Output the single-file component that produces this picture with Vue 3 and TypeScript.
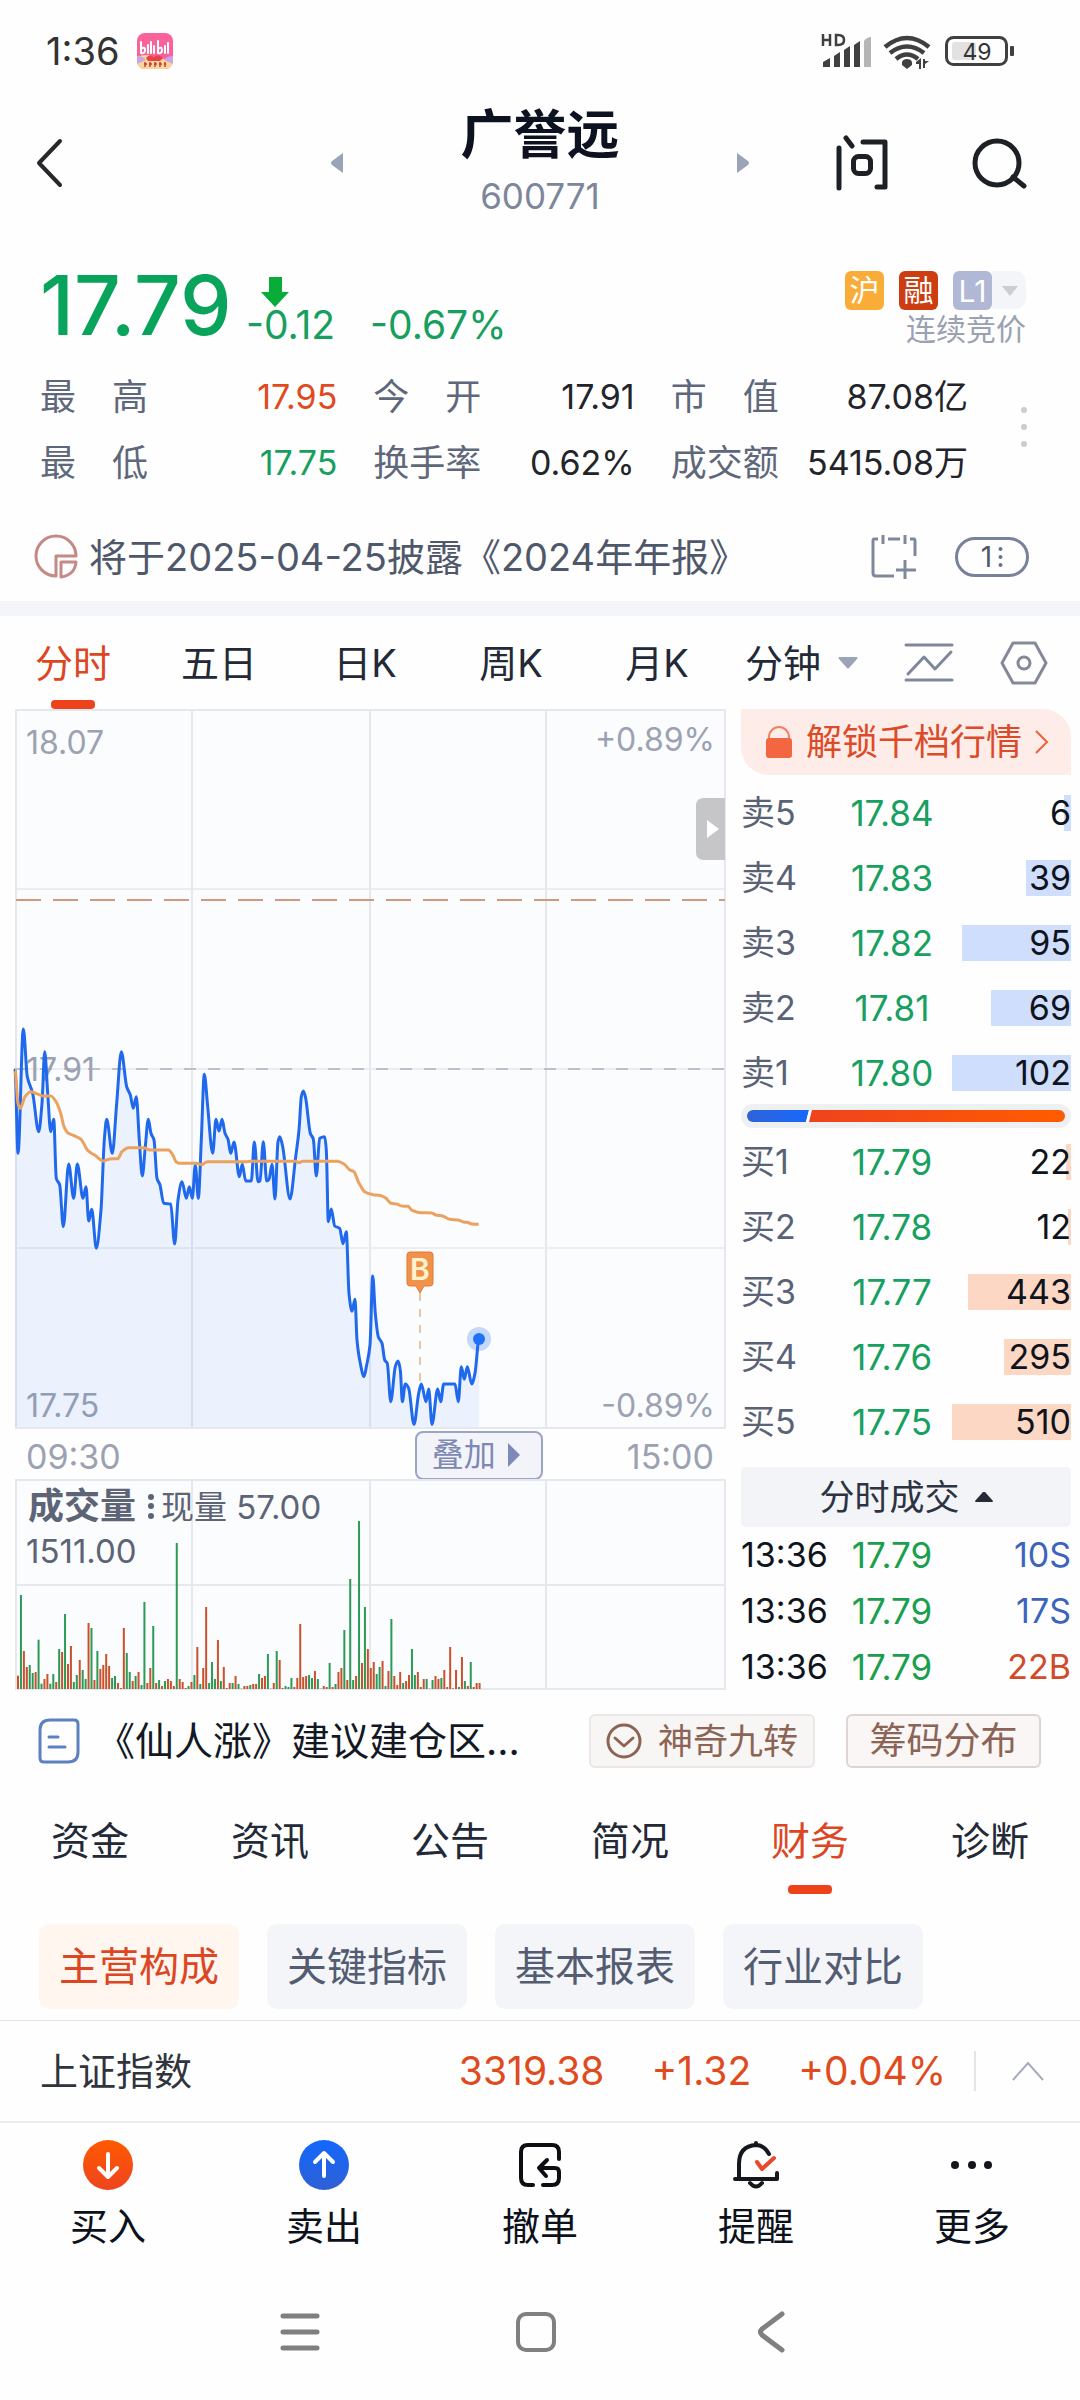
<script setup lang="ts">
import { ref } from 'vue'

type Tone = 'up' | 'down' | 'plain'
type Point = [number, number]

interface Level {
  name: string
  price: string
  volume: number
  share: number
}

const stats: { label: string; value: string; tone: Tone }[] = [
  { label: '最 高', value: '17.95', tone: 'up' },
  { label: '今 开', value: '17.91', tone: 'plain' },
  { label: '市 值', value: '87.08亿', tone: 'plain' },
  { label: '最 低', value: '17.75', tone: 'down' },
  { label: '换手率', value: '0.62%', tone: 'plain' },
  { label: '成交额', value: '5415.08万', tone: 'plain' },
]

const periods = ['分时', '五日', '日K', '周K', '月K']
const activePeriod = ref('分时')
const minute = ref('分钟')

const asks: Level[] = [
  { name: '卖5', price: '17.84', volume: 6, share: 5 },
  { name: '卖4', price: '17.83', volume: 39, share: 33 },
  { name: '卖3', price: '17.82', volume: 95, share: 81 },
  { name: '卖2', price: '17.81', volume: 69, share: 59 },
  { name: '卖1', price: '17.80', volume: 102, share: 88 },
]
const bids: Level[] = [
  { name: '买1', price: '17.79', volume: 22, share: 4 },
  { name: '买2', price: '17.78', volume: 12, share: 2 },
  { name: '买3', price: '17.77', volume: 443, share: 76 },
  { name: '买4', price: '17.76', volume: 295, share: 50 },
  { name: '买5', price: '17.75', volume: 510, share: 88 },
]
const deals = [
  { time: '13:36', price: '17.79', size: '10S', side: 'sell' },
  { time: '13:36', price: '17.79', size: '17S', side: 'sell' },
  { time: '13:36', price: '17.79', size: '22B', side: 'buy' },
]

const sections = ['资金', '资讯', '公告', '简况', '财务', '诊断']
const activeSection = ref('财务')
const chips = ['主营构成', '关键指标', '基本报表', '行业对比']
const activeChip = ref('主营构成')

/* Samples are stored as thirds of a unit, with an offset for each run. */
function run(ox: number, oy: number, raw: number[]): Point[] {
  const out: Point[] = []
  for (let i = 0; i < raw.length; i += 2) out.push([ox + raw[i] / 3, oy + raw[i + 1] / 3])
  return out
}

const price: Point[] = [
  ...run(0, 980, [
    45, 270, 54, 520, 70, 147, 82, 290, 98, 340, 116, 455, 126, 370, 134, 215, 143, 340, 152, 455, 161, 418,
    169, 595, 179, 615, 190, 740, 206, 552, 221, 655, 232, 552, 249, 655, 258, 620, 266, 723, 275, 688, 289, 805,
    303, 690, 313, 480, 320, 418, 337, 520, 350, 370, 364, 215, 380, 320, 391, 345, 400, 385, 409, 350, 418, 480,
    427, 588, 436, 500, 445, 418, 453, 460, 462, 480, 471, 595, 480, 615, 491, 670, 512, 672, 524, 792, 534, 660,
    546, 605, 559, 655, 568, 620, 577, 655, 586, 555, 595, 655, 604, 480, 613, 283, 623, 380, 638, 520, 648, 418,
    657, 453, 666, 418, 675, 460, 684, 478, 692, 520, 702, 486, 718, 590, 727, 553, 737, 603, 754, 603, 763, 486,
    774, 605,
  ]),
  ...run(250, 1040, [
    30, 423, 40, 305, 50, 423, 57, 418, 66, 373, 75, 477, 84, 305, 89, 290, 98, 320, 120, 477, 137, 350, 147, 270,
    154, 170, 160, 153, 167, 175, 181, 280, 190, 297, 199, 408, 209, 295, 224, 290, 229, 330, 235, 545, 244, 507,
    254, 558, 269, 565, 279, 611, 289, 575, 297, 760, 306, 814, 315, 778, 321, 900, 330, 965, 342, 1010, 350, 975,
  ]),
  ...run(370, 1180, [
    0, 495, 8, 288, 16, 400, 25, 470, 36, 490, 44, 540, 52, 550, 62, 665, 76, 560, 84, 543, 91, 570, 97, 665,
    106, 612, 116, 625, 132, 733, 146, 640, 154, 612, 168, 665, 176, 627, 186, 733, 203, 627, 212, 665, 221, 612,
    255, 612, 265, 665, 274, 560, 283, 598, 292, 560, 305, 612, 315, 580, 327, 478,
  ]),
]

const average: Point[] = [
  ...run(0, 980, [
    45, 270, 54, 370, 61, 385, 75, 350, 92, 335, 110, 341, 130, 348, 152, 348, 170, 368, 182, 400, 192, 440,
    205, 460, 220, 466, 243, 478, 264, 512, 285, 526, 310, 543, 330, 537, 353, 536, 366, 515, 385, 503, 430, 503,
    450, 510, 505, 510, 517, 522, 528, 545, 540, 550, 590, 550, 605, 554, 622, 545, 740, 545,
  ]),
  ...run(250, 1040, [
    0, 364, 137, 364, 148, 368, 158, 364, 262, 364, 283, 373, 300, 390, 312, 395, 325, 425, 345, 456, 370, 464,
    388, 466, 406, 473, 423, 490, 440, 492, 455, 498, 474, 499, 486, 511, 512, 518, 545, 519, 560, 526, 575, 527,
    600, 538, 625, 540, 640, 546, 652, 547, 665, 552, 686, 553,
  ]),
]

/* Monotone cubic interpolation keeps peaks rounded without overshoot. */
function smooth(p: Point[]): string {
  const slope = (i: number) => (p[i + 1][1] - p[i][1]) / (p[i + 1][0] - p[i][0])
  const m = p.map((_, i) => {
    if (i === 0 || i === p.length - 1) return 0
    const a = slope(i - 1)
    const b = slope(i)
    return a * b <= 0 ? 0 : (2 * a * b) / (a + b)
  })
  let d = `M${p[0][0].toFixed(1)} ${p[0][1].toFixed(1)}`
  for (let i = 0; i < p.length - 1; i++) {
    const h = (p[i + 1][0] - p[i][0]) / 3
    const c = [
      p[i][0] + h, p[i][1] + m[i] * h,
      p[i + 1][0] - h, p[i + 1][1] - m[i + 1] * h,
      p[i + 1][0], p[i + 1][1],
    ]
    d += 'C' + c.map((n) => n.toFixed(1)).join(' ')
  }
  return d
}

const pricePath = smooth(price)
const areaPath = `${pricePath}V1427H15Z`
const averagePath = smooth(average)

/* One entry a minute: r for a rise, g for a fall, then the bar's height. */
const volume = (
  'r40 g282 r114 r66 g72 g48 r51 g148 g16 r30 r45 g16 g45 r21 g120 r111 g225 r75 r129 g21 g42 r87 g57 g30 r198 g183 ' +
  'r27 g114 r60 r72 r105 r69 g33 g39 r18 r3 r183 g108 g51 r24 g39 r51 g12 g261 r18 r63 g189 r18 g27 r9 g24 r30 r24 ' +
  'r9 g438 r30 r21 r3 g9 r21 g42 r126 g15 r63 r246 g18 g81 g30 r147 g24 r66 r3 r18 g18 r39 g15 g1 r9 r9 g12 r15 r15 ' +
  'g45 r33 r39 g105 r1 r18 g114 r87 r3 g9 g6 g33 r6 r33 r195 r36 r39 g42 g33 r54 g30 r1 r9 r6 g78 r6 g15 r51 r63 ' +
  'g177 r27 g330 g27 r39 g504 r78 g246 r120 r63 r81 g45 g66 r84 g9 r54 g210 r39 r12 r51 g18 r24 r42 g120 g42 r51 r6 ' +
  'r30 g30 r1 g27 r39 r30 g33 r57 r6 r126 r2 r57 g6 r96 g24 r9 g81 r6 r18 r18'
)
  .split(' ')
  .map((s, i) => ({ x: 17 + i * 2.94, h: Number(s.slice(1)) / 3, rise: s[0] === 'r' }))
</script>

<template>
  <div class="app">
    <div class="status">
      <span class="clock">1:36</span>
      <svg class="bili" width="36" height="36" viewBox="0 0 36 36" aria-hidden="true">
        <defs><clipPath id="bili"><rect width="36" height="36" rx="8" /></clipPath></defs>
        <g clip-path="url(#bili)">
          <rect width="36" height="36" fill="#f9629b" />
          <path d="M0 24q9-4 18 0t18 0v12H0z" fill="#f9d79a" />
          <path d="M0 23q6 0 9 4l-9 4zM36 23q-6 0-9 4l9 4z" fill="#c9a5e6" />
          <path d="M9 25q4-5 8-1 5-4 9 1l-3 3H11z" fill="#e8434a" />
          <path d="M4 9v11M4 16q4-3 4 1t-4 3M11 12v8M14 9v11M17 13v7M21 8v12M21 16q4-3 4 1t-4 3M28 13v7M31 10v10" fill="none" stroke="#fff" stroke-width="2" stroke-linecap="round" />
          <path d="M7 31h3M12 31h3M17 31h3M22 31h3M27 31h2M8 29v5M13 29v5M18 29v5M23 29v5M28 29v5" stroke="#cf3a3a" stroke-width="1.5" />
        </g>
      </svg>
      <svg class="signals" width="196" height="36" viewBox="820 33 196 36" aria-hidden="true">
        <path d="M823 34v12M830 34v12M823 40h7M836 35v10h2q6 0 6-5t-6-5z" fill="none" stroke="#404040" stroke-width="2.500" />
        <g fill="#404040">
          <path d="M823 62l7-4v9h-7zM834 56l6-4v15h-6zM844 50l6-4v21h-6zM854 45l6-4v26h-6z" />
          <path d="M864 41q3-4 7-4v30h-7z" fill="#b5b5b5" />
          <path d="M902 65q-1-6 5-6t5 6l-5 4z" />
          <path d="M916 62l5-4v11h-2v-5h-3zM923 59h2v2h4l-4 3v4h-2z" />
        </g>
        <g fill="none" stroke="#404040" stroke-width="4.500">
          <path d="M885 47q22-18 44 0" />
          <path d="M890 53q17-13 34 0" />
          <path d="M896 59q11-9 22 0" />
        </g>
        <rect x="946.500" y="37.500" width="60" height="27" rx="7" fill="none" stroke="#404040" stroke-width="3" />
        <rect x="952" y="42" width="24" height="18" rx="3" fill="#e2e2e2" />
        <rect x="1010" y="46" width="4" height="10" rx="1" fill="#404040" />
        <text x="977" y="60" text-anchor="middle" font-size="23" fill="#333">49</text>
      </svg>
    </div>

    <header class="top">
      <button class="icon-btn back" type="button" aria-label="返回">
        <svg width="28" height="50" viewBox="0 0 28 50"><path d="M25 3L4 25l21 22" fill="none" stroke="#26282b" stroke-width="4" stroke-linecap="round" stroke-linejoin="round" /></svg>
      </button>
      <button class="icon-btn" type="button" aria-label="上一只">
        <svg width="12" height="20" viewBox="0 0 12 20"><path d="M12 0v20L1 12q-2-2 0-4z" fill="#9aa3b8" /></svg>
      </button>
      <div class="title">
        <h1>广誉远</h1>
        <span>600771</span>
      </div>
      <button class="icon-btn" type="button" aria-label="下一只">
        <svg width="12" height="20" viewBox="0 0 12 20"><path d="M0 0v20l11-8q2-2 0-4z" fill="#9aa3b8" /></svg>
      </button>
      <button class="icon-btn ask" type="button" aria-label="问">
        <svg width="56" height="56" viewBox="833 134 56 56" fill="none" stroke="#1d2126" stroke-width="5" stroke-linecap="round" stroke-linejoin="round">
          <path d="M838 147v40M845 137l6 8M862 141h22v45h-8" />
          <rect x="852.500" y="155.500" width="17" height="17" rx="5" />
        </svg>
      </button>
      <button class="icon-btn search" type="button" aria-label="搜索">
        <svg width="56" height="52" viewBox="972 136 56 52" fill="none" stroke="#1d2126" stroke-width="5" stroke-linecap="round">
          <circle cx="997" cy="162" r="22" /><path d="M1013 176l11 9" />
        </svg>
      </button>
    </header>

    <section class="quote">
      <strong class="last">17.79</strong>
      <div class="change">
        <svg width="28" height="34" viewBox="0 0 28 34" aria-hidden="true"><path d="M8 4h13v15h7L14 34 0 19h8z" fill="#07ad37" /></svg>
        <div class="diffs"><span>-0.12</span><span>-0.67%</span></div>
      </div>
      <div class="flags">
        <div class="badges">
          <span class="badge hu">沪</span>
          <span class="badge rong">融</span>
          <button class="badge level" type="button">L1</button>
          <svg width="34" height="38" viewBox="0 0 34 38" aria-hidden="true"><path d="M0 0h22q12 0 12 12v14q0 12-12 12H0z" fill="#f4f5f8" /><path d="M10 15h16l-8 10z" fill="#c9cdd6" /></svg>
        </div>
        <span class="phase">连续竞价</span>
      </div>
    </section>

    <section class="stats">
      <dl>
        <div v-for="s in stats" :key="s.label">
          <dt>{{ s.label }}</dt>
          <dd :class="s.tone">{{ s.value }}</dd>
        </div>
      </dl>
      <button class="icon-btn more-stats" type="button" aria-label="更多指标">
        <svg width="8" height="42" viewBox="0 0 8 42" fill="#c9cdd8"><circle cx="4" cy="4" r="3" /><circle cx="4" cy="21" r="3" /><circle cx="4" cy="38" r="3" /></svg>
      </button>
    </section>

    <section class="notice">
      <svg width="46" height="46" viewBox="0 0 46 46" fill="none" stroke="#c48a85" stroke-width="3" aria-hidden="true">
        <path d="M22 42A20 20 0 1 1 42 22H22zM27 28h15q-1 13-15 15z" stroke-linejoin="round" />
      </svg>
      <a href="#report">将于2025-04-25披露《2024年年报》</a>
      <button class="icon-btn" type="button" aria-label="加入日历">
        <svg width="46" height="46" viewBox="0 0 46 46" fill="none" stroke="#7f889b" stroke-width="3">
          <path d="M7 5H3q-1 0-1 2v32q0 3 3 3h18M17 5h12M39 5h4q1 0 1 2v15M12 1v9M34 1v9M34 26v19M25 36h20" />
        </svg>
      </button>
      <button class="count" type="button">
        <span>1</span>
        <svg width="5" height="22" viewBox="0 0 5 22" fill="#697287" aria-hidden="true"><circle cx="2.500" cy="3" r="2" /><circle cx="2.500" cy="11" r="2" /><circle cx="2.500" cy="19" r="2" /></svg>
      </button>
    </section>

    <nav class="periods">
      <button v-for="p in periods" :key="p" type="button" :class="{ active: p === activePeriod }" @click="activePeriod = p">{{ p }}</button>
      <div class="tools">
        <label class="minute">
          <select v-model="minute" aria-label="分钟周期"><option>分钟</option></select>
          <svg width="20" height="12" viewBox="0 0 20 12" aria-hidden="true"><path d="M1 0h18q1 1 0 2l-8 9q-1 1-2 0L1 2q-1-1 0-2z" fill="#9aa3b8" /></svg>
        </label>
        <button class="icon-btn" type="button" aria-label="画线">
          <svg width="50" height="40" viewBox="0 0 50 40" fill="none" stroke="#7f889b" stroke-width="3" stroke-linecap="round" stroke-linejoin="round"><path d="M2 2h46M2 37h46M4 31l16-17 11 12L47 9" /></svg>
        </button>
        <button class="icon-btn" type="button" aria-label="设置">
          <svg width="48" height="44" viewBox="0 0 48 44" fill="none" stroke="#828999" stroke-width="3" stroke-linejoin="round"><path d="M13 2h22l11 20-11 20H13L2 22z" /><circle cx="24" cy="22" r="6" /></svg>
        </button>
      </div>
    </nav>

    <main class="market">
      <div class="charts">
        <svg class="chart" viewBox="15 709 711 720" role="img" aria-label="分时走势">
          <rect x="16" y="710" width="709" height="718" fill="#fbfcfe" />
          <g fill="none" stroke="#e6e8ee" stroke-width="2">
            <path d="M16 710h709v718H16zM192 710v718M370 710v718M546 710v718" />
            <path d="M16 889h709M16 1069h709M16 1248h709" stroke-width="1.500" />
          </g>
          <path d="M16 900h709" stroke="#cf9a80" stroke-width="2" stroke-dasharray="25 12" />
          <path d="M16 1069h709" stroke="#bdbfc9" stroke-width="2" stroke-dasharray="12 12" />
          <g class="axis">
            <text x="26" y="754">18.07</text>
            <text x="715" y="751" text-anchor="end">+0.89%</text>
            <text x="26" y="1081">17.91</text>
            <text x="26" y="1417">17.75</text>
            <text x="715" y="1417" text-anchor="end">-0.89%</text>
          </g>
          <path :d="areaPath" fill="#1b6cf0" fill-opacity="0.070" />
          <path d="M420 1293v90" stroke="#e6c9a4" stroke-width="2" stroke-dasharray="8 8" />
          <path :d="pricePath" fill="none" stroke="#2069ec" stroke-width="3" stroke-linejoin="round" stroke-linecap="round" />
          <path :d="averagePath" fill="none" stroke="#eaa25e" stroke-width="3" stroke-linejoin="round" />
          <circle cx="479" cy="1339" r="12" fill="#1b6cf0" fill-opacity="0.250" />
          <circle cx="479" cy="1339" r="6" fill="#1f71f7" />
          <path d="M410 1252h20q3 0 3 3v28q0 3-3 3h-6l-4 7-4-7h-6q-3 0-3-3v-28q0-3 3-3z" fill="#f0924a" stroke="#e07a35" />
          <text class="buy-mark" x="420" y="1280" text-anchor="middle">B</text>
          <path d="M725 798h-21q-8 0-8 8v46q0 8 8 8h21z" fill="#c6c6c8" />
          <path d="M707 820v18l12-9z" fill="#fff" />
        </svg>
        <div class="times">
          <span>09:30</span>
          <button class="overlay" type="button">
            叠加
            <svg width="12" height="24" viewBox="0 0 12 24" aria-hidden="true"><path d="M0 0l12 12L0 24z" fill="#7d89b8" /></svg>
          </button>
          <span>15:00</span>
        </div>
        <svg class="chart" viewBox="15 1479 711 211" role="img" aria-label="成交量">
          <rect x="16" y="1480" width="709" height="209" fill="#fbfcfe" />
          <path d="M16 1480h709v209H16zM192 1480v209M370 1480v209M546 1480v209M16 1585h709" fill="none" stroke="#e6e8ee" stroke-width="2" />
          <rect v-for="(b, i) in volume" :key="i" :x="b.x" :y="1689 - b.h" width="2" :height="b.h" :fill="b.rise ? '#c9512c' : '#2c9a57'" />
          <g class="legend">
            <text class="strong" x="28" y="1519">成交量</text>
            <circle cx="151" cy="1497" r="3" /><circle cx="151" cy="1506" r="3" /><circle cx="151" cy="1516" r="3" />
            <text x="161" y="1519">现量 57.00</text>
            <text x="26" y="1563">1511.00</text>
          </g>
        </svg>
      </div>

      <aside class="book">
        <button class="unlock" type="button">
          <svg width="28" height="32" viewBox="0 0 28 32" aria-hidden="true"><path d="M4 14v-3a10 10 0 0 1 20 0v3" fill="none" stroke="#f08264" stroke-width="2" /><rect x="1" y="12" width="26" height="20" rx="3" fill="#f26641" /></svg>
          解锁千档行情
          <svg width="14" height="26" viewBox="0 0 14 26" aria-hidden="true"><path d="M1 2l11 11L1 24" fill="none" stroke="#e8623f" stroke-width="2" /></svg>
        </button>
        <table class="levels ask-side">
          <tbody>
            <tr v-for="l in asks" :key="l.name">
              <th scope="row">{{ l.name }}</th>
              <td class="price">{{ l.price }}</td>
              <td class="size"><i :style="{ width: l.share + '%' }"></i><span>{{ l.volume }}</span></td>
            </tr>
          </tbody>
        </table>
        <svg class="ratio" width="330" height="24" viewBox="0 0 330 24" aria-hidden="true">
          <defs>
            <linearGradient id="sellRatio"><stop offset="0" stop-color="#2f63d8" /><stop offset="1" stop-color="#1768fb" /></linearGradient>
            <linearGradient id="buyRatio"><stop offset="0" stop-color="#ee431d" /><stop offset="1" stop-color="#ff5c00" /></linearGradient>
          </defs>
          <rect width="330" height="24" rx="12" fill="#eff0f2" />
          <path d="M12 6h56l-3 12H12a6 6 0 0 1 0-12z" fill="url(#sellRatio)" />
          <path d="M68 6h3l-3 12h-3z" fill="#fff" />
          <path d="M71 6h247a6 6 0 0 1 0 12H68z" fill="url(#buyRatio)" />
        </svg>
        <table class="levels bid-side">
          <tbody>
            <tr v-for="l in bids" :key="l.name">
              <th scope="row">{{ l.name }}</th>
              <td class="price">{{ l.price }}</td>
              <td class="size"><i :style="{ width: l.share + '%' }"></i><span>{{ l.volume }}</span></td>
            </tr>
          </tbody>
        </table>
        <button class="deals-toggle" type="button">
          分时成交
          <svg width="18" height="10" viewBox="0 0 18 10" aria-hidden="true"><path d="M8 0q1-1 2 0l8 9q0 1-1 1H1q-1 0-1-1z" fill="#262b38" /></svg>
        </button>
        <table class="levels deals">
          <tbody>
            <tr v-for="(d, i) in deals" :key="i">
              <td class="time">{{ d.time }}</td>
              <td class="price">{{ d.price }}</td>
              <td class="size" :class="d.side">{{ d.size }}</td>
            </tr>
          </tbody>
        </table>
      </aside>
    </main>

    <section class="tips">
      <svg width="42" height="46" viewBox="0 0 42 46" fill="none" stroke="#5c80c2" stroke-width="3" stroke-linecap="round" aria-hidden="true">
        <path d="M12 2h24q4 0 4 4v28q0 10-10 10H6q-4 0-4-4V12Q2 2 12 2zM11 19h9M11 29h16" />
      </svg>
      <a href="#tip">《仙人涨》建议建仓区...</a>
      <button class="tag nine" type="button">
        <svg width="36" height="36" viewBox="0 0 36 36" fill="none" stroke="#8b6455" stroke-width="3" stroke-linecap="round" stroke-linejoin="round" aria-hidden="true"><circle cx="18" cy="18" r="16" /><path d="M9 15l9 8 9-8" /></svg>
        神奇九转
      </button>
      <button class="tag chipdist" type="button">筹码分布</button>
    </section>

    <nav class="sections">
      <button v-for="s in sections" :key="s" type="button" :class="{ active: s === activeSection }" @click="activeSection = s">{{ s }}</button>
    </nav>

    <div class="chips">
      <button v-for="c in chips" :key="c" type="button" :class="{ active: c === activeChip }" @click="activeChip = c">{{ c }}</button>
    </div>

    <section class="index">
      <span class="name">上证指数</span>
      <span class="num">3319.38</span>
      <span class="num">+1.32</span>
      <span class="num">+0.04%</span>
      <button class="icon-btn" type="button" aria-label="展开指数">
        <svg width="32" height="20" viewBox="0 0 32 20"><path d="M1 19L16 2l15 17" fill="none" stroke="#a3abbd" stroke-width="2" /></svg>
      </button>
    </section>

    <nav class="actions">
      <button type="button">
        <svg width="52" height="52" viewBox="0 0 52 52" aria-hidden="true">
          <defs><linearGradient id="buyDisc" x2="0" y2="1"><stop offset="0" stop-color="#ff5a00" /><stop offset="1" stop-color="#ee4420" /></linearGradient></defs>
          <circle cx="26" cy="26" r="25" fill="url(#buyDisc)" /><path d="M26 15v22M17 29l9 9 9-9" fill="none" stroke="#fff" stroke-width="4" stroke-linecap="round" stroke-linejoin="round" />
        </svg>
        买入
      </button>
      <button type="button">
        <svg width="52" height="52" viewBox="0 0 52 52" aria-hidden="true">
          <defs><linearGradient id="sellDisc" x2="0" y2="1"><stop offset="0" stop-color="#1267fd" /><stop offset="1" stop-color="#2f60d4" /></linearGradient></defs>
          <circle cx="26" cy="26" r="25" fill="url(#sellDisc)" /><path d="M26 37V15M17 23l9-9 9 9" fill="none" stroke="#fff" stroke-width="4" stroke-linecap="round" stroke-linejoin="round" />
        </svg>
        卖出
      </button>
      <button type="button">
        <svg width="52" height="52" viewBox="0 0 52 52" fill="none" stroke="#0c0e12" stroke-width="4" stroke-linecap="round" stroke-linejoin="round" aria-hidden="true">
          <path d="M45 20V13q0-7-7-7H14q-7 0-7 7v26q0 7 7 7h5M29 46h9q7 0 7-7v-6q0-4-4-4H26M33 21l-8 8 7 8" />
        </svg>
        撤单
      </button>
      <button type="button">
        <svg width="52" height="52" viewBox="0 0 52 52" fill="none" stroke="#14171c" stroke-width="4" stroke-linecap="round" stroke-linejoin="round" aria-hidden="true">
          <path d="M39 15Q34 6 26 6 9 7 9 25v15M5 40h42v-6M26 4v2M20 44q6 7 12 0" /><path d="M27 23l5 7 12-11" stroke="#e8492a" />
        </svg>
        提醒
      </button>
      <button type="button">
        <svg width="52" height="52" viewBox="0 0 52 52" fill="#14171c" aria-hidden="true"><circle cx="9" cy="26" r="4" /><circle cx="26" cy="26" r="4" /><circle cx="42" cy="26" r="4" /></svg>
        更多
      </button>
    </nav>

    <div class="sysnav">
      <button class="icon-btn" type="button" aria-label="最近任务">
        <svg width="42" height="42" viewBox="0 0 42 42" stroke="#808080" stroke-width="5" stroke-linecap="round"><path d="M4 5h34M4 21h34M4 37h34" /></svg>
      </button>
      <button class="icon-btn" type="button" aria-label="主页">
        <svg width="42" height="42" viewBox="0 0 42 42"><rect x="3" y="3" width="36" height="36" rx="8" fill="none" stroke="#808080" stroke-width="4" /></svg>
      </button>
      <button class="icon-btn" type="button" aria-label="后退">
        <svg width="42" height="42" viewBox="0 0 42 42" fill="none" stroke="#808080" stroke-width="5" stroke-linecap="round" stroke-linejoin="round"><path d="M31 3L11 18q-3 3 0 6l20 15" /></svg>
      </button>
    </div>
  </div>
</template>

<style>
body {
  margin: 0;
  background: #fefefe;
}
</style>

<style scoped>
.app {
  font-family: Inter, 'Noto Sans CJK SC', sans-serif;
  font-size: 34px;
  line-height: 48px;
  color: #232936;
  background: #fefefe;
}
button,
select {
  font: inherit;
  color: inherit;
  background: none;
  border: 0;
  padding: 0;
  margin: 0;
  cursor: pointer;
}
svg {
  display: block;
  flex: none;
}
a {
  color: inherit;
  text-decoration: none;
}
.icon-btn {
  display: flex;
  align-items: center;
  justify-content: center;
}
.status {
  display: flex;
  align-items: center;
  height: 96px;
  padding: 6px 64px 0 46px;
  box-sizing: border-box;
}
.clock {
  width: 74px;
  font-size: 38px;
  color: #333;
}
.bili {
  margin-left: 17px;
}
.signals {
  margin-left: auto;
}
.top {
  display: grid;
  grid-template-columns: 331px 12px 1fr 12px 83px 58px 190px;
  align-items: center;
  height: 134px;
}
.back {
  justify-self: start;
  margin-left: 35px;
}
.ask {
  justify-self: end;
  grid-column: 5 / 7;
}
.search {
  justify-self: end;
  margin-right: 52px;
}
.title {
  display: flex;
  flex-direction: column;
  align-items: center;
  color: #7d869a;
}
.title h1 {
  margin: 0;
  font-size: 53px;
  line-height: 66px;
  font-weight: 700;
  color: #0d1220;
}
.title span {
  font-size: 35px;
  line-height: 56px;
}
.quote {
  display: flex;
  padding: 24px 54px 0 40px;
  height: 136px;
  box-sizing: border-box;
}
.last {
  width: 206px;
  font-size: 82px;
  line-height: 104px;
  font-weight: 500;
  color: #08a45c;
}
.change {
  margin-top: 19px;
  color: #169f5f;
}
.change svg {
  margin-left: 15px;
}
.diffs {
  display: flex;
  gap: 35px;
  font-size: 39px;
  line-height: 36px;
}
.flags {
  display: flex;
  flex-direction: column;
  align-items: flex-end;
  margin: 17px 0 0 auto;
}
.badges {
  display: flex;
}
.badge {
  width: 39px;
  height: 39px;
  margin-right: 15px;
  border-radius: 6px;
  color: #fff;
  font-size: 30px;
  line-height: 38px;
  text-align: center;
}
.hu {
  background: #faac39;
}
.rong {
  background: #cc3e12;
}
.level {
  margin-right: 0;
  background: #b1b8d5;
}
.phase {
  margin-top: 3px;
  font-size: 30px;
  line-height: 32px;
  color: #9aa1b2;
}
.stats {
  display: flex;
  align-items: center;
}
.stats dl {
  flex: 1;
  display: grid;
  grid-template-columns: 297fr 261fr 297fr;
  column-gap: 36px;
  row-gap: 18px;
  margin: 0;
  padding: 7px 0 0 40px;
}
.stats dl div {
  display: flex;
  justify-content: space-between;
}
.stats dt {
  width: 108px;
  font-size: 36px;
  color: #5f687b;
  text-align-last: justify;
  white-space: nowrap;
}
.stats dd {
  margin: 0;
  color: #222429;
  white-space: nowrap;
}
.stats dd.up {
  color: #e04a1c;
}
.stats dd.down {
  color: #169f5f;
}
.more-stats {
  width: 112px;
}
.notice {
  display: flex;
  align-items: center;
  height: 129px;
  padding: 25px 51px 0 34px;
  border-bottom: 15px solid #f4f5fa;
  box-sizing: border-box;
  color: #4f586b;
  font-size: 38px;
}
.notice a {
  margin: 0 auto 0 9px;
}
.count {
  display: flex;
  align-items: center;
  justify-content: center;
  gap: 6px;
  width: 74px;
  height: 40px;
  margin-left: 38px;
  border: 3px solid #78829a;
  border-radius: 20px;
  box-sizing: border-box;
  font-size: 28px;
  line-height: 28px;
}
.periods {
  display: grid;
  grid-template-columns: repeat(5, 1fr) 350px;
  height: 93px;
  font-size: 38px;
}
.periods > button,
.sections button {
  position: relative;
}
.periods .active,
.sections .active {
  color: #dc4622;
}
.periods .active::after,
.sections .active::after {
  content: '';
  position: absolute;
  left: calc(50% - 22px);
  bottom: 0;
  width: 44px;
  height: 9px;
  border-radius: 4px;
  background: #ee431a;
}
.tools {
  display: flex;
  align-items: center;
  justify-content: space-between;
  padding: 0 32px 0 15px;
}
.minute {
  display: flex;
  align-items: center;
  gap: 16px;
}
.minute select {
  appearance: none;
  height: 48px;
}
.market {
  display: grid;
  grid-template-columns: 1fr 330px;
  gap: 15px;
  padding: 0 9px 0 15px;
}
.chart {
  width: 100%;
  height: auto;
  overflow: visible;
}
.axis text {
  font-size: 32px;
  fill: #9ba2b1;
}
.buy-mark {
  font-size: 30px;
  font-weight: 600;
  fill: #fff3cf;
}
.times {
  display: grid;
  grid-template-columns: 1fr auto auto;
  column-gap: 84px;
  align-items: center;
  height: 50px;
  padding: 0 12px 0 11px;
  color: #9ba2b1;
}
.times span {
  padding-top: 4px;
}
.overlay {
  display: flex;
  align-items: center;
  justify-content: space-between;
  width: 128px;
  height: 49px;
  padding: 0 21px 0 15px;
  box-sizing: border-box;
  border: 2px solid #9aa4c8;
  border-radius: 8px;
  background: #f3f4f9;
  color: #7d88b3;
  font-size: 32px;
  line-height: 40px;
}
.legend {
  fill: #5c6475;
}
.legend text {
  font-size: 33px;
}
.legend .strong {
  font-size: 36px;
  font-weight: 700;
}
.unlock {
  display: flex;
  align-items: center;
  justify-content: space-between;
  width: 100%;
  height: 66px;
  padding: 0 22px 0 24px;
  background: #feece8;
  border-radius: 0 28px 0 28px;
  color: #dc4b29;
  font-size: 36px;
}
.levels {
  width: 100%;
  border-collapse: collapse;
  table-layout: fixed;
}
.ask-side {
  margin-top: 4px;
}
.levels tr {
  height: 65px;
}
.levels th,
.levels td {
  padding: 3px 0 0;
  font-weight: 400;
}
.levels th,
.levels .time {
  width: 107px;
  text-align: left;
}
.levels th {
  color: #5a6275;
}
.levels .time {
  color: #0f131c;
}
.levels .price {
  width: 88px;
  font-size: 35px;
  text-align: center;
  color: #17a05f;
}
.levels .size {
  position: relative;
  text-align: right;
  color: #0f131c;
}
.size span {
  position: relative;
}
.size i {
  position: absolute;
  right: 0;
  top: 16px;
  height: 36px;
}
.ask-side i {
  background: #cfdefd;
}
.bid-side i {
  background: #fcd8c4;
}
.ratio {
  width: 100%;
}
.deals-toggle {
  display: flex;
  align-items: center;
  justify-content: center;
  gap: 15px;
  width: 100%;
  height: 60px;
  margin-top: 14px;
  border-radius: 5px;
  background: #f3f4f8;
  color: #2d3342;
  font-size: 35px;
}
.deals tr {
  height: 56px;
}
.deals td {
  padding: 0;
}
.deals .price {
  color: #1a9f4e;
}
.levels .sell {
  color: #3c64bd;
}
.levels .buy {
  color: #d04b2a;
}
.tips {
  display: flex;
  align-items: center;
  height: 92px;
  padding: 0 39px 0 38px;
  font-size: 39px;
  color: #131824;
}
.tips a {
  margin: 0 auto 0 16px;
}
.tag {
  display: flex;
  align-items: center;
  justify-content: center;
  height: 54px;
  box-sizing: border-box;
  border: 2px solid #ded5d2;
  border-radius: 6px;
  background: #faf6f5;
  color: #8b6455;
  font-size: 37px;
  line-height: 50px;
}
.nine {
  gap: 16px;
  width: 226px;
  margin-right: 31px;
  border-color: #ebe7e6;
  background: #f8f6f5;
  font-size: 35px;
}
.chipdist {
  width: 195px;
}
.sections {
  display: grid;
  grid-template-columns: repeat(6, 1fr);
  height: 107px;
  font-size: 39px;
}
.chips {
  display: flex;
  gap: 28px;
  padding: 30px 39px 11px;
  border-bottom: 1px solid #e3e4e8;
  font-size: 40px;
}
.chips button {
  width: 200px;
  height: 85px;
  border-radius: 10px;
  background: #f4f5f9;
  color: #535c70;
}
.chips .active {
  background: #fff6f0;
  color: #dd4622;
}
.index {
  display: flex;
  align-items: center;
  height: 100px;
  padding: 0 36px 0 40px;
  border-bottom: 2px solid #ececee;
}
.index .name {
  margin-right: auto;
  font-size: 38px;
  color: #30343c;
}
.index .num {
  margin-left: 47px;
  font-size: 39px;
  color: #e04a1c;
}
.index .icon-btn {
  height: 40px;
  margin-left: 28px;
  padding-left: 36px;
  border-left: 2px solid #e3e4e8;
}
.actions {
  display: grid;
  grid-template-columns: repeat(5, 1fr);
  padding-top: 16px;
  font-size: 38px;
  color: #0d111b;
}
.actions button {
  display: flex;
  flex-direction: column;
  align-items: center;
  gap: 11px;
}
.sysnav {
  display: flex;
  justify-content: center;
  gap: 194px;
  padding: 61px 8px 45px 0;
}
</style>
